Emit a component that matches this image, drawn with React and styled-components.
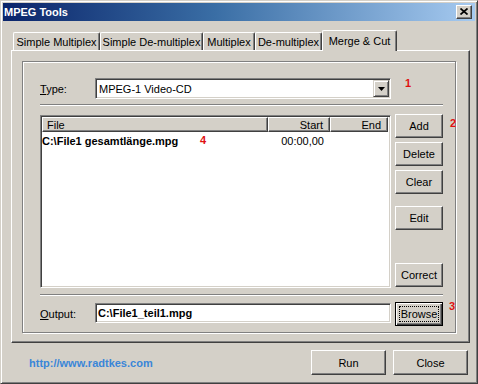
import React from 'react'
import styled, { createGlobalStyle } from 'styled-components'

const GlobalStyle = createGlobalStyle`
  html, body { margin: 0; padding: 0; background: #D4D0C8; }
  body {
    font-family: "Liberation Sans", Arial, sans-serif;
    font-size: 11px;
    color: #000;
  }
  * { box-sizing: border-box; }
`

const tabs = [
  { label: 'Simple Multiplex', width: 87 },
  { label: 'Simple De-multiplex', width: 103 },
  { label: 'Multiplex', width: 52 },
  { label: 'De-multiplex', width: 67 },
  { label: 'Merge & Cut', width: 75, active: true },
]

export default function App(){
  return(
    <>
      <GlobalStyle/>
      <Window>
        <TitleBar>
          <span>MPEG Tools</span>
          <CloseBox>
            <svg width="8" height="7" viewBox="0 0 8 7">
              <path d="M0.5 0.5 L7.5 6.5 M7.5 0.5 L0.5 6.5" stroke="#000" strokeWidth="1.7"/>
            </svg>
          </CloseBox>
        </TitleBar>
        <Body>
          <TabStrip>
            {tabs.map(t=>(
              <Tab key={t.label} $active={t.active} $width={t.width}>{t.label}</Tab>
            ))}
          </TabStrip>
          <TabPanel>
            <GroupBox>
              <Row $height={21}>
                <Label><u>T</u>ype:</Label>
                <Combo>
                  <ComboText>MPEG-1 Video-CD</ComboText>
                  <DropButton>
                    <svg width="7" height="4" viewBox="0 0 7 4"><polygon points="0,0 7,0 3.5,4" fill="#000"/></svg>
                  </DropButton>
                </Combo>
              </Row>
              <Separator $top={5}/>
              <ListArea>
                <ListView>
                  <Header>
                    <HeadCell $width={226}>File</HeadCell>
                    <HeadCell $width={62} $right>Start</HeadCell>
                    <HeadCell $width={58} $right>End</HeadCell>
                  </Header>
                  <ListRow>
                    <Cell $width={226} $bold>C:\File1 gesamtlänge.mpg</Cell>
                    <Cell $width={62} $right>00:00,00</Cell>
                    <Cell $width={58} $right></Cell>
                  </ListRow>
                </ListView>
                <ButtonColumn>
                  <Button>Add</Button>
                  <Button>Delete</Button>
                  <Button>Clear</Button>
                  <Button $spaced>Edit</Button>
                  <Button $bottom>Correct</Button>
                </ButtonColumn>
              </ListArea>
              <Separator $top={6}/>
              <Row $height={24} $top={6}>
                <Label><u>O</u>utput:</Label>
                <TextInput>C:\File1_teil1.mpg</TextInput>
                <DefaultButton><FocusRing>Browse</FocusRing></DefaultButton>
              </Row>
              <Marker style={{left: 382, top: 15}}>1</Marker>
              <Marker style={{left: 427, top: 55}}>2</Marker>
              <Marker style={{left: 426, top: 238}}>3</Marker>
              <Marker style={{left: 177, top: 72}}>4</Marker>
            </GroupBox>
          </TabPanel>
          <Footer>
            <Link>http://www.radtkes.com</Link>
            <Button $wide>Run</Button>
            <Button $wide>Close</Button>
          </Footer>
        </Body>
      </Window>
    </>
  );
}

// STYLE
const Window = styled.div`
  width: 478px;
  height: 384px;
  background: #D4D0C8;
  border: 1px solid;
  border-color: #D4D0C8 #404040 #404040 #D4D0C8;
  box-shadow: inset 1px 1px #fff, inset -1px -1px #808080;
  padding: 2px;
  display: flex;
  flex-direction: column;
`;
const TitleBar = styled.div`
  flex: none;
  height: 18px;
  background: linear-gradient(90deg, #0A246A 0%, #3A6EA5 45%, #A6CAF0 100%);
  display: flex;
  align-items: center;
  justify-content: space-between;
  padding: 0 3px 0 1px;
  color: #fff;
  font-weight: bold;
  font-size: 11px;
`;
const CloseBox = styled.div`
  width: 16px;
  height: 14px;
  background: #D4D0C8;
  border: 1px solid;
  border-color: #fff #404040 #404040 #fff;
  box-shadow: inset -1px -1px #808080;
  display: flex;
  align-items: center;
  justify-content: center;
  padding-bottom: 1px;
`;
const Body = styled.div`
  flex: 1;
  display: flex;
  flex-direction: column;
  padding: 9px 5px 0 8px;
`;
const TabStrip = styled.div`
  flex: none;
  height: 20px;
  display: flex;
  align-items: flex-end;
  padding-left: 2px;
  position: relative;
  z-index: 1;
`;
const Tab = styled.div`
  width: ${p=>p.$width}px;
  height: ${p=>p.$active ? 21 : 18}px;
  margin-bottom: ${p=>p.$active ? -1 : 0}px;
  background: #D4D0C8;
  border-top: 1px solid #fff;
  border-left: 1px solid #fff;
  border-right: 1px solid #404040;
  box-shadow: inset -1px 0 #808080;
  border-radius: 2px 2px 0 0;
  display: flex;
  align-items: center;
  justify-content: center;
  padding-top: ${p=>p.$active ? 0 : 1}px;
  white-space: nowrap;
`;
const TabPanel = styled.div`
  flex: none;
  height: 293px;
  border: 1px solid;
  border-color: #fff #404040 #404040 #fff;
  box-shadow: inset -1px -1px #808080;
  padding: 10px 13px 9px 10px;
  display: flex;
`;
const GroupBox = styled.div`
  flex: 1;
  position: relative;
  border: 1px solid #808080;
  box-shadow: inset 1px 1px #fff, 1px 1px #fff;
  padding: 16px 11px 0 17px;
  display: flex;
  flex-direction: column;
`;
const Row = styled.div`
  flex: none;
  height: ${p=>p.$height}px;
  margin-top: ${p=>p.$top || 0}px;
  display: flex;
  align-items: center;
`;
const Label = styled.div`
  width: 55px;
  flex: none;
`;
const Sunken = styled.div`
  background: #fff;
  border: 1px solid;
  border-color: #808080 #fff #fff #808080;
  box-shadow: inset 1px 1px #404040, inset -1px -1px #D4D0C8;
`;
const Combo = styled(Sunken)`
  width: 296px;
  height: 21px;
  padding: 1px;
  display: flex;
  align-items: stretch;
`;
const ComboText = styled.div`
  flex: 1;
  display: flex;
  align-items: center;
  padding-left: 2px;
`;
const DropButton = styled.div`
  width: 16px;
  background: #D4D0C8;
  border: 1px solid;
  border-color: #D4D0C8 #404040 #404040 #D4D0C8;
  box-shadow: inset 1px 1px #fff, inset -1px -1px #808080;
  display: flex;
  align-items: center;
  justify-content: center;
`;
const TextInput = styled(Sunken)`
  width: 296px;
  height: 20px;
  margin-top: -2px;
  padding: 0 2px;
  display: flex;
  align-items: center;
  font-weight: bold;
`;
const Separator = styled.div`
  flex: none;
  width: 403px;
  height: 2px;
  margin-top: ${p=>p.$top}px;
  border-top: 1px solid #808080;
  border-bottom: 1px solid #fff;
`;
const ListArea = styled.div`
  flex: none;
  height: 174px;
  margin-top: 8px;
  display: flex;
  gap: 4px;
`;
const ListView = styled(Sunken)`
  width: 351px;
  height: 173px;
  margin-top: 1px;
  padding: 1px;
  display: flex;
  flex-direction: column;
`;
const Header = styled.div`
  display: flex;
  height: 15px;
  flex: none;
`;
const HeadCell = styled.div`
  width: ${p=>p.$width}px;
  background: #D4D0C8;
  border: 1px solid;
  border-color: #fff #404040 #404040 #fff;
  box-shadow: inset -1px -1px #808080;
  display: flex;
  align-items: center;
  justify-content: ${p=>p.$right ? 'flex-end' : 'flex-start'};
  padding: 0 ${p=>p.$right ? 6 : 4}px;
`;
const ListRow = styled.div`
  display: flex;
  height: 16px;
  margin-top: 1px;
`;
const Cell = styled.div`
  width: ${p=>p.$width}px;
  display: flex;
  align-items: center;
  justify-content: ${p=>p.$right ? 'flex-end' : 'flex-start'};
  padding: 0 ${p=>p.$right ? 6 : 0}px;
  font-weight: ${p=>p.$bold ? 'bold' : 'normal'};
  white-space: nowrap;
`;
const ButtonColumn = styled.div`
  width: 48px;
  display: flex;
  flex-direction: column;
  gap: 4px;
  padding-bottom: 1px;
`;
const Button = styled.div`
  flex: none;
  width: ${p=>p.$wide ? 75 : 48}px;
  height: ${p=>p.$wide ? 25 : 24}px;
  margin-top: ${p=>p.$bottom ? 'auto' : p.$spaced ? '8px' : '0'};
  background: #D4D0C8;
  border: 1px solid;
  border-color: #fff #404040 #404040 #fff;
  box-shadow: inset -1px -1px #808080;
  display: flex;
  align-items: center;
  justify-content: center;
`;
const DefaultButton = styled.div`
  width: 48px;
  height: 24px;
  margin-left: 4px;
  background: #D4D0C8;
  border: 1px solid #000;
  box-shadow: inset 1px 1px #fff, inset -1px -1px #404040, inset -2px -2px #808080;
  padding: 3px;
  display: flex;
`;
const FocusRing = styled.div`
  flex: 1;
  border: 1px dotted #000;
  display: flex;
  align-items: center;
  justify-content: center;
`;
const Marker = styled.span`
  position: absolute;
  color: #E01010;
  font-weight: bold;
  font-size: 11px;
  line-height: 13px;
`;
const Footer = styled.div`
  flex: none;
  height: 25px;
  margin-top: 7px;
  margin-right: 2px;
  display: flex;
  align-items: center;
  gap: 7px;
`;
const Link = styled.div`
  flex: 1;
  margin-left: 18px;
  color: #3A86D8;
  font-weight: bold;
`;
